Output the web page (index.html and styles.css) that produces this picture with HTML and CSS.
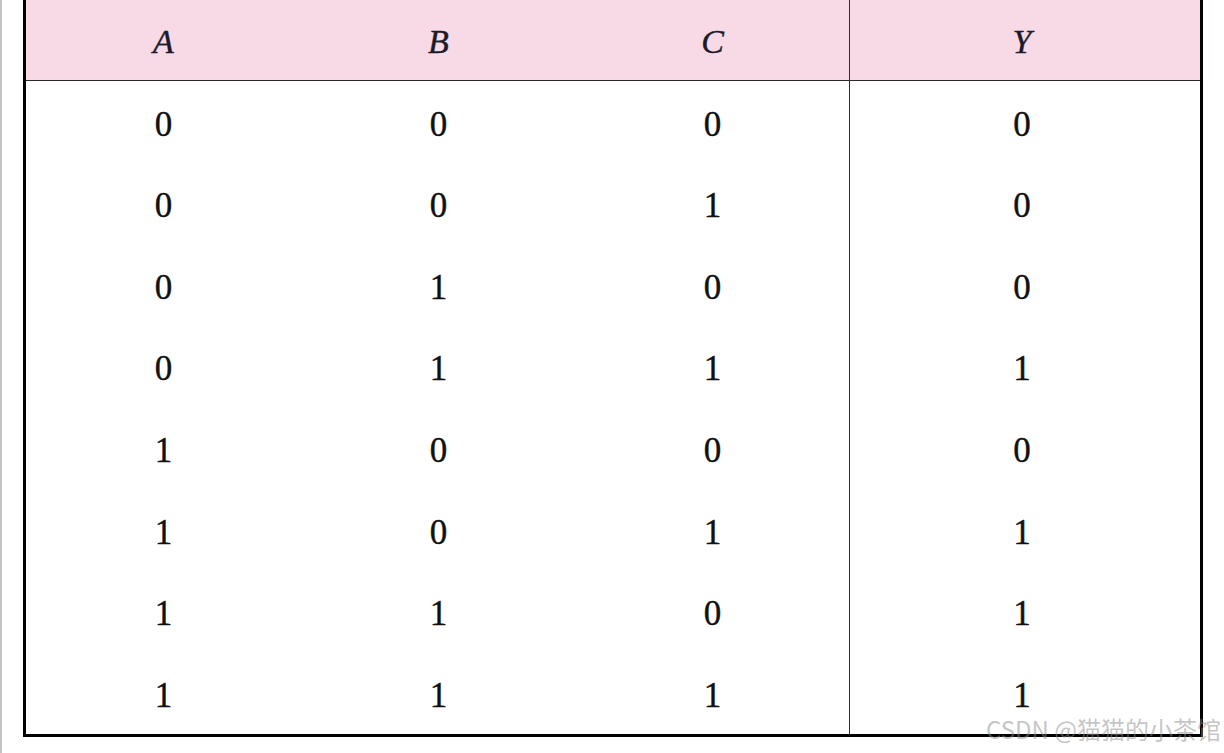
FILE: index.html
```html
<!DOCTYPE html>
<html lang="zh">
<head>
<meta charset="utf-8">
<title>真值表</title>
<link rel="stylesheet" href="styles.css">
</head>
<body>
<div class="page">
  <table class="truth">
    <thead>
      <tr><th>A</th><th>B</th><th class="split">C</th><th>Y</th></tr>
    </thead>
    <tbody>
      <tr><td>0</td><td>0</td><td class="split">0</td><td>0</td></tr>
      <tr><td>0</td><td>0</td><td class="split">1</td><td>0</td></tr>
      <tr><td>0</td><td>1</td><td class="split">0</td><td>0</td></tr>
      <tr><td>0</td><td>1</td><td class="split">1</td><td>1</td></tr>
      <tr><td>1</td><td>0</td><td class="split">0</td><td>0</td></tr>
      <tr><td>1</td><td>0</td><td class="split">1</td><td>1</td></tr>
      <tr><td>1</td><td>1</td><td class="split">0</td><td>1</td></tr>
      <tr><td>1</td><td>1</td><td class="split">1</td><td>1</td></tr>
    </tbody>
  </table>
  <div class="watermark">CSDN @猫猫的小茶馆</div>
</div>
</body>
</html>
```

FILE: styles.css
```css
html, body {
  margin: 0;
  padding: 0;
  background: #ffffff;
}

.page {
  position: relative;
  width: 1224px;
  height: 753px;
  box-sizing: border-box;
  border-left: 2px solid #c4c4c4;
  padding-left: 21px;
  overflow: hidden;
}

.truth {
  width: 1180px;
  border-collapse: separate;
  border-spacing: 0;
  border-left: 3px solid #000;
  border-right: 3px solid #000;
  border-bottom: 3px solid #000;
  table-layout: fixed;
  font-family: "Liberation Serif", "Times New Roman", serif;
  color: #111;
}

.truth th,
.truth td {
  padding: 0;
  text-align: center;
}

.truth th:nth-child(1),
.truth th:nth-child(2) { width: 275px; }
.truth th:nth-child(3) { width: 274px; }

.truth thead th {
  height: 81px;
  background: #f8dae6;
  border-bottom: 1px solid #2a2a2a;
  font-style: italic;
  font-weight: normal;
  font-size: 34px;
  padding-top: 3px;
  box-sizing: border-box;
  color: #1a1a2a;
  -webkit-text-stroke: 0.4px #1a1a2a;
}

.truth thead th:last-child {
  padding-right: 6px;
}

.truth tbody td {
  height: 81.6px;
  font-size: 35px;
  line-height: 1.1;
  padding-top: 6px;
  box-sizing: border-box;
  -webkit-text-stroke: 0.4px #111;
}

.truth tbody td:last-child {
  padding-right: 6px;
}

.truth .split {
  border-right: 1px solid #2e2e2e;
}

.watermark {
  position: absolute;
  right: 3px;
  bottom: 13px;
  font-family: "Noto Sans CJK SC", "Noto Sans", sans-serif;
  font-size: 24px;
  line-height: 0.9;
  color: rgba(140, 140, 140, 0.5);
}
```
